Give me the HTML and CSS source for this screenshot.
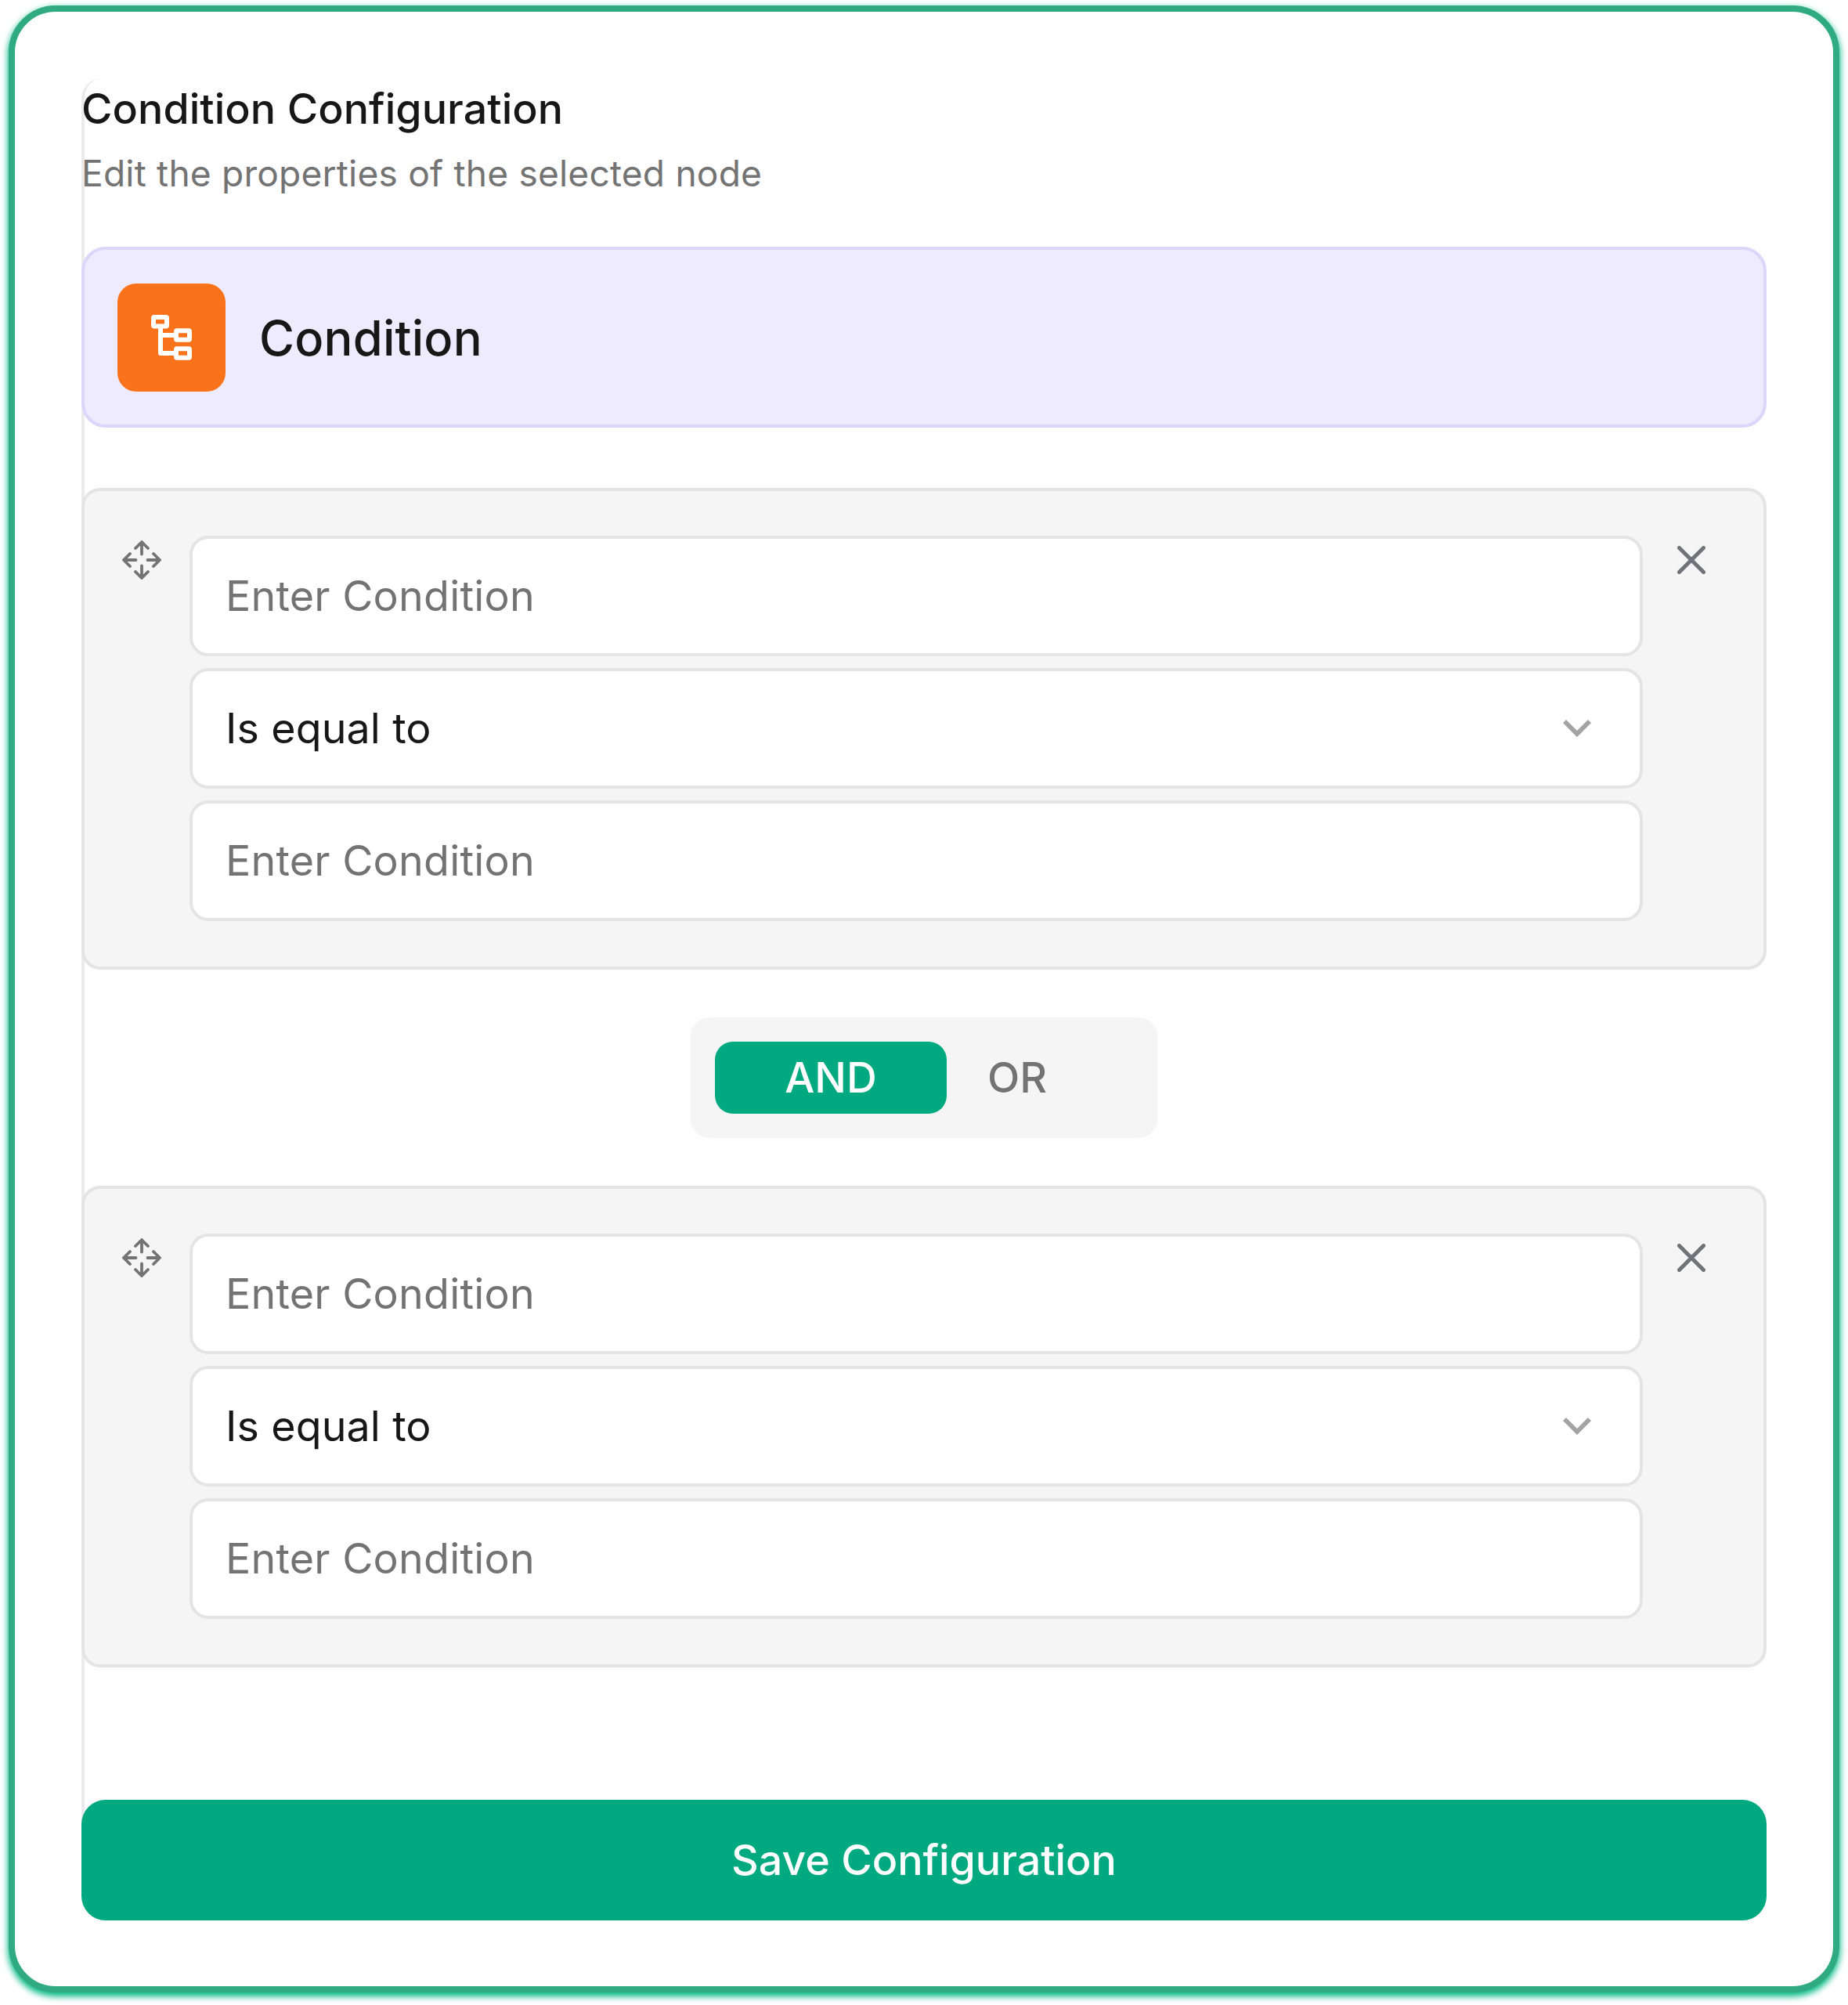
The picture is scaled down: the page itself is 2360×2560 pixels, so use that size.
FILE: index.html
```html
<!DOCTYPE html>
<html lang="en">
<head>
<meta charset="utf-8">
<title>Condition Configuration</title>
<link rel="stylesheet" href="styles.css">
</head>
<body>
<svg class="symbols" aria-hidden="true">
  <symbol id="move" viewBox="0 0 50 50">
    <path d="M25 17.500V2M17 10 25 2l8 8M25 32.500V48M17 40 25 48l8-8M17.500 25H2M10 17 2 25l8 8M32.500 25H48M40 17 48 25l-8 8"/>
  </symbol>
  <symbol id="close" viewBox="0 0 36 36"><path d="M2.500 2.500l31 31M33.500 2.500l-31 31"/></symbol>
  <symbol id="chevron" viewBox="0 0 36 22"><path d="M2 2l16 16L34 2"/></symbol>
</svg>
<main class="frame">
  <section class="panel">
    <header class="heading">
      <h1 class="title">Condition Configuration</h1>
      <p class="subtitle">Edit the properties of the selected node</p>
    </header>

    <div class="node">
      <span class="node-icon">
        <svg viewBox="0 0 52 58" width="52" height="58">
          <path d="M12 17V49H30M12 26H30"/>
          <rect x="3" y="3" width="17" height="11.500" rx="1"/>
          <rect x="32" y="20.300" width="17" height="11.500" rx="1"/>
          <rect x="32" y="43.300" width="17" height="11.500" rx="1"/>
        </svg>
      </span>
      <span class="node-name">Condition</span>
    </div>

    <div class="rule">
      <svg class="icon-move"><use href="#move"/></svg>
      <div class="fields">
        <div class="field placeholder">Enter Condition</div>
        <div class="field select">Is equal to<svg class="icon-chevron"><use href="#chevron"/></svg></div>
        <div class="field placeholder">Enter Condition</div>
      </div>
      <svg class="icon-close"><use href="#close"/></svg>
    </div>

    <div class="operator">
      <span class="option active">AND</span>
      <span class="option">OR</span>
    </div>

    <div class="rule">
      <svg class="icon-move"><use href="#move"/></svg>
      <div class="fields">
        <div class="field placeholder">Enter Condition</div>
        <div class="field select">Is equal to<svg class="icon-chevron"><use href="#chevron"/></svg></div>
        <div class="field placeholder">Enter Condition</div>
      </div>
      <svg class="icon-close"><use href="#close"/></svg>
    </div>

    <button class="save" type="button">Save Configuration</button>
  </section>
</main>
</body>
</html>
```
FILE: styles.css
```css
* { box-sizing: border-box; margin: 0; }

body {
  display: flow-root;
  height: 2560px;
  overflow: hidden;
  background: #fff;
  color: #171717;
  font-family: Inter, "Liberation Sans", sans-serif;
  font-size: 53.76px;
}

.symbols { display: none; }
svg { fill: none; flex: none; }

.frame {
  width: 2338px;
  height: 2537px;
  margin: 7px 0 0 11px;
  padding: 85px;
  border: 8px solid #30aa80;
  border-radius: 60px;
  background: #fefefe;
  box-shadow: 0 4px 8px 1px #00b881;
}

.panel {
  position: relative;
  display: flex;
  flex-direction: column;
  height: 2352px;
}

/* left edge of the sheet, running behind the content */
.panel::before {
  content: "";
  position: absolute;
  z-index: 0;
  inset: 0 auto 40px 0;
  width: 40px;
  border-left: 4px solid #ebebeb;
  border-radius: 26px 0 0 0;
}
.panel > * { position: relative; }

.heading { height: 215px; padding-top: 12px; }
.title {
  font-size: 53.76px;
  line-height: 54px;
  font-weight: 500;
  letter-spacing: 0.07px;
}
.subtitle {
  margin-top: 24px;
  font-size: 46.08px;
  line-height: 62px;
  letter-spacing: 0.2px;
  color: #737373;
}

.node {
  display: flex;
  align-items: center;
  gap: 43px;
  height: 231px;
  padding: 0 42px;
  border: 4px solid #dcd6fb;
  border-radius: 31px;
  background: #eeebfe;
}
.node-icon {
  display: grid;
  place-items: center;
  width: 138px;
  height: 138px;
  border-radius: 24px;
  background: #fa731a;
}
.node-icon svg { stroke: #fff; stroke-width: 6; stroke-linejoin: round; }
.node-name { padding-top: 1px; font-size: 61.44px; font-weight: 500; letter-spacing: 0.2px; }

.rule {
  display: flex;
  height: 615px;
  margin-top: 77px;
  padding: 57px 74px 0 48px;
  border: 4px solid #e4e4e4;
  border-radius: 24px;
  background: #f5f5f5;
}
.icon-move {
  width: 50px;
  height: 50px;
  margin-top: 6px;
  stroke: #737373;
  stroke-width: 3.800;
  stroke-linecap: round;
  stroke-linejoin: round;
}
.fields {
  display: flex;
  flex: 1;
  flex-direction: column;
  gap: 15px;
  margin: 0 44px 0 36px;
}
.field {
  display: flex;
  align-items: center;
  justify-content: space-between;
  height: 154px;
  padding: 0 62px 2px 42px;
  border: 4px solid #e4e4e4;
  border-radius: 24px;
  background: #fff;
  letter-spacing: 0.1px;
}
.placeholder { color: #737373; letter-spacing: 0.22px; }
.icon-chevron { width: 36px; height: 22px; margin-top: 2px; stroke: #a3a3a3; stroke-width: 5.800; }
.icon-close {
  width: 36px;
  height: 36px;
  margin-top: 13px;
  stroke: #6f737a;
  stroke-width: 5;
  stroke-linecap: round;
}

.operator {
  display: flex;
  align-items: center;
  align-self: center;
  width: 596px;
  height: 154px;
  margin-top: 61px;
  padding: 0 31px;
  border-radius: 24px;
  background: #f5f5f5;
}
.operator + .rule { margin-top: 61px; }
.option { padding: 0 0 1px 52px; color: #737373; font-weight: 500; }
.active {
  display: flex;
  align-items: center;
  justify-content: center;
  width: 296px;
  height: 92px;
  padding: 0 0 1px;
  border-radius: 23px;
  background: #00a97f;
  color: #fff;
}

.save {
  height: 154px;
  margin-top: auto;
  padding: 0 0 1px;
  border: 0;
  border-radius: 31px;
  background: #00a97f;
  color: #fff;
  font: inherit;
  font-weight: 500;
}
```
